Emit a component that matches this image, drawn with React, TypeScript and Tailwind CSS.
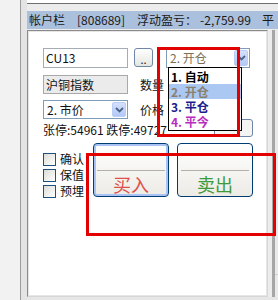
import React from "react";

const font = "font-['Noto_Sans_CJK_SC','Noto_Sans',sans-serif]";

function Chevron() {
  return (
    <svg width="9" height="6" viewBox="0 0 9 6" aria-hidden="true">
      <path d="M1 1 L4.5 4.5 L8 1" fill="none" stroke="#4d6185" strokeWidth="1.8" />
    </svg>
  );
}

function Select({ label, className, textClass }: { label: string; className: string; textClass: string }) {
  return (
    <div className={`flex items-stretch border border-[#7f9db9] bg-white ${className}`}>
      <span className={`flex-1 pl-[3px] text-[12px] leading-[17px] ${textClass}`}>{label}</span>
      <div className="m-[1px] flex w-[14px] items-center justify-center rounded-[2px] border border-[#b9cdf6] bg-gradient-to-b from-[#d4e0fc] to-[#b2c9f7]">
        <Chevron />
      </div>
    </div>
  );
}

function Check({ label }: { label: string }) {
  return (
    <div className="flex h-[16px] items-center gap-[4px]">
      <span className="h-[13px] w-[13px] border border-[#1c5180] bg-gradient-to-br from-[#dcdcd7] to-white" />
      <span className="text-[12px] leading-[14px] text-[#111]">{label}</span>
    </div>
  );
}

function TradeButton({ label, color, focused }: { label: string; color: string; focused?: boolean }) {
  return (
    <div
      className={`flex h-[54px] w-[76px] flex-col rounded-[4px] border border-[#003c74] bg-gradient-to-b from-white to-[#ecebe6] ${
        focused ? "shadow-[inset_0_0_0_2px_#a9c3f5]" : ""
      }`}
    >
      <div className="h-[26px]" />
      <div className="mx-[3px] h-px bg-[#b3b0a8]" />
      <div className={`flex flex-1 items-center justify-center text-[18px] leading-[20px] ${color}`}>{label}</div>
    </div>
  );
}

export default function App() {
  return (
    <div className={`relative flex h-[300px] w-[278px] overflow-hidden bg-[#ececec] text-[#111] ${font}`}>
      {/* left strip */}
      <div className="h-full w-[21px] border-r border-[#9c9c9c] bg-[#f2f2f2]" />
      <div className="h-full w-[6px] bg-[#e4e4e4]" />

      <div className="flex min-w-0 flex-1 flex-col">
        <div className="h-[4px] border-b border-[#6f6f6f] bg-white" />
        <div className="h-[7px]" />
        <div className="flex h-[18px] items-center overflow-hidden whitespace-nowrap bg-[#abc0dc] pl-[2px] text-[12px] leading-[16px] text-[#1a1a1a]">
          <span>帐户栏</span>
          <span className="ml-[12px]">[808689]</span>
          <span className="ml-[12px]">浮动盈亏：</span>
          <span className="ml-[3px]">-2,759.99</span>
          <span className="ml-[11px]">平</span>
        </div>
        <div className="h-px" />

        <div className="flex min-h-0 flex-1">
          {/* main panel */}
          <div className="relative w-[241px] border-l border-t border-l-[#8a8a8a] border-t-[#8a8a8a] border-r border-b border-r-[#d6d6d6] border-b-[#d6d6d6] bg-white">
            <div className="h-full border border-[#e6e6e6] pl-[14px] pt-[16px]">
              {/* row 1 */}
              <div className="flex items-start">
                <div className="h-[20px] w-[85px] border border-[#a5acb5] bg-white pl-[2px] text-[12px] leading-[18px]">CU13</div>
                <div className="ml-[6px] flex h-[19px] w-[19px] items-end justify-center rounded-[3px] border border-[#6f86a8] bg-gradient-to-b from-white to-[#e6e6e0] pb-[2px] text-[11px] leading-[10px]">
                  ..
                </div>
                <Select label="2. 开仓" className="ml-[13px] h-[20px] w-[84px]" textClass="text-[#7d6f55]" />
              </div>
              {/* row 2 */}
              <div className="mt-[7px] flex items-center">
                <div className="h-[19px] w-[85px] border border-[#a9a9a9] bg-[#ebebeb] pl-[2px] text-[12px] leading-[17px]">沪铜指数</div>
                <span className="ml-[12px] text-[12px] leading-[14px]">数量</span>
              </div>
              {/* row 3 */}
              <div className="mt-[6px] flex items-center">
                <Select label="2. 市价" className="h-[19px] w-[85px]" textClass="text-[#111]" />
                <span className="ml-[12px] text-[12px] leading-[14px]">价格</span>
              </div>
              {/* row 4 */}
              <div className="flex h-[18px] items-end">
                <span className="whitespace-nowrap text-[12px] leading-[14px]">张停:54961 跌停:49727</span>
                <div className="ml-auto mr-[13px] h-[18px] w-[39px] rounded-[3px] border border-[#6f86a8] bg-[#f4f4f2] text-center text-[9px] leading-[14px] text-[#444]">
                  ......
                </div>
              </div>
              {/* row 5 */}
              <div className="mt-[6px] flex items-start">
                <div className="flex w-[50px] flex-col pt-[8px]">
                  <Check label="确认" />
                  <Check label="保值" />
                  <Check label="预埋" />
                </div>
                <TradeButton label="买入" color="text-[#e0504a]" focused />
                <div className="ml-[8px]">
                  <TradeButton label="卖出" color="text-[#3f9a3c]" />
                </div>
              </div>
            </div>

            {/* open dropdown list */}
            <div className="absolute left-[140px] top-[36px] w-[74px] border border-black bg-white py-[1px] text-[12px] font-bold leading-[15px]">
              <div className="h-[15px] pl-[2px] text-black">1. 自动</div>
              <div className="h-[15px] bg-[#aac8f2] pl-[2px] text-[#8a8070]">2. 开仓</div>
              <div className="h-[15px] pl-[2px] text-[#1c1c8c]">3. 平仓</div>
              <div className="h-[15px] pl-[2px] text-[#b82cc0]">4. 平今</div>
            </div>
          </div>

          {/* right strip */}
          <div className="flex flex-1">
            <div className="w-[4px] bg-[#ececec]" />
            <div className="w-[3px] bg-[#a6a6a6]" />
            <div className="flex flex-1 flex-col bg-[#e9e9e9]">
              <div className="h-[244px]" />
              <div className="h-px bg-[#cfcfcf]" />
            </div>
          </div>
        </div>
        <div className="h-[3px] bg-[#e6e6e6]" />
      </div>

      {/* red annotation boxes */}
      <div className="pointer-events-none absolute left-[157px] top-[47px] h-[90px] w-[83px] border-[3px] border-[#e20000]" />
      <div className="pointer-events-none absolute left-[86px] top-[153px] h-[83px] w-[190px] border-[3px] border-[#e20000]" />
    </div>
  );
}
